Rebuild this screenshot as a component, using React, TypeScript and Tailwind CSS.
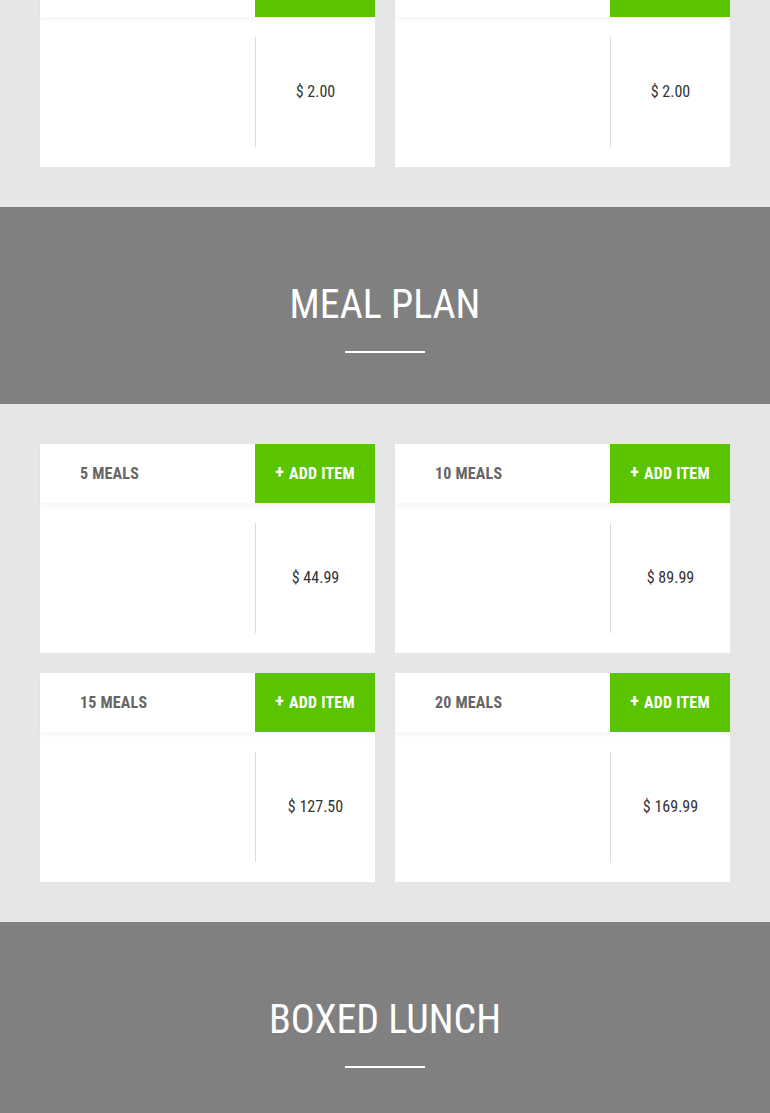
type Item = { name: string; price: string; hidden?: boolean };

function Card({ item }: { item: Item }) {
  return (
    <div className="bg-white flex flex-col">
      <div className="h-[59px] flex bg-white shadow-[0_3px_4px_rgba(0,0,0,0.04)] relative z-10">
        <div className="flex-1 flex items-center pl-10 text-[16px] font-bold text-[#666] tracking-[0.2px]">
          {item.name}
        </div>
        <button className="w-[120px] bg-[#5ac400] text-white text-[16px] font-bold flex items-center justify-center gap-[5px] tracking-[0.2px]">
          {!item.hidden && (
            <>
              <span className="text-[18px] leading-none -mt-[3px]">+</span>
              <span>ADD ITEM</span>
            </>
          )}
        </button>
      </div>
      <div className="h-[150px] flex py-5">
        <div className="flex-1" />
        <div className="w-[120px] border-l border-[#dcdcdc] flex items-center justify-center text-[16px] text-[#333]">
          {item.price}
        </div>
      </div>
    </div>
  );
}

function Band({ title }: { title: string }) {
  return (
    <div className="bg-[#808080] h-[197px] pt-[76px] flex flex-col items-center shrink-0">
      <h2 className="text-[40px] leading-[44px] text-white font-normal">{title}</h2>
      <div className="mt-6 w-20 h-[2px] bg-white" />
    </div>
  );
}

export default function App() {
  const top: Item[] = [
    { name: "", price: "$ 2.00", hidden: true },
    { name: "", price: "$ 2.00", hidden: true },
  ];
  const meals: Item[] = [
    { name: "5 MEALS", price: "$ 44.99" },
    { name: "10 MEALS", price: "$ 89.99" },
    { name: "15 MEALS", price: "$ 127.50" },
    { name: "20 MEALS", price: "$ 169.99" },
  ];
  return (
    <div
      className="w-[770px] h-[1113px] overflow-hidden bg-[#e6e6e6] flex flex-col"
      style={{ fontFamily: '"Roboto Condensed", Roboto, sans-serif' }}
    >
      <div className="px-10 pb-10 -mt-[42px] grid grid-cols-2 gap-5">
        {top.map((it, i) => (
          <Card key={i} item={it} />
        ))}
      </div>
      <Band title="MEAL PLAN" />
      <div className="px-10 py-10 grid grid-cols-2 gap-5">
        {meals.map((it) => (
          <Card key={it.name} item={it} />
        ))}
      </div>
      <Band title="BOXED LUNCH" />
    </div>
  );
}
